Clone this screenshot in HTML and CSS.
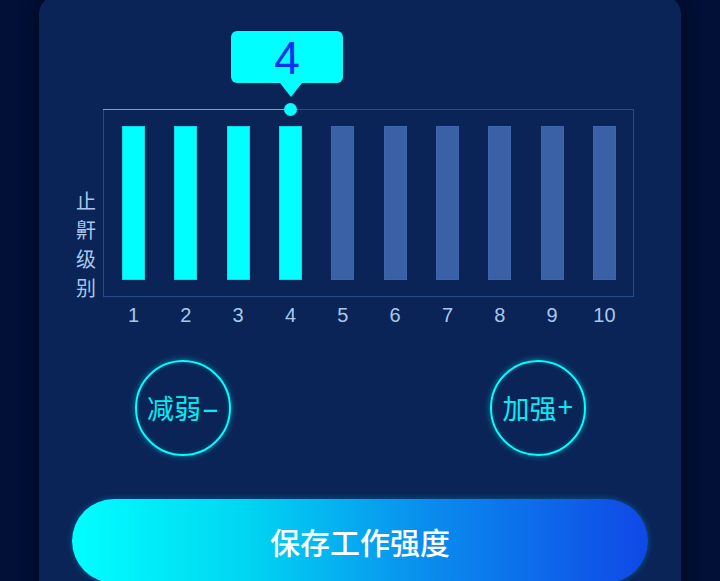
FILE: index.html
```html
<!DOCTYPE html>
<html lang="zh-CN">
<head>
    <meta charset="UTF-8">
    <meta name="viewport" content="width=device-width, initial-scale=1.0">
    <title>止鼾级别</title>
    <link rel="stylesheet" href="styles.css">
</head>
<body>
    <div class="page">
        <div class="card">
            <div class="chart-row">
                <div class="y-label">
                    <span>止</span><span>鼾</span><span>级</span><span>别</span>
                </div>
                <div class="chart-col">
                    <div class="chart">
                        <div class="level-line"></div>
                        <div class="level-dot"></div>
                        <div class="tip">4</div>
                        <div class="bars">
                            <div class="bar active"></div>
                            <div class="bar active"></div>
                            <div class="bar active"></div>
                            <div class="bar active"></div>
                            <div class="bar"></div>
                            <div class="bar"></div>
                            <div class="bar"></div>
                            <div class="bar"></div>
                            <div class="bar"></div>
                            <div class="bar"></div>
                        </div>
                    </div>
                    <div class="axis">
                        <span>1</span><span>2</span><span>3</span><span>4</span><span>5</span>
                        <span>6</span><span>7</span><span>8</span><span>9</span><span>10</span>
                    </div>
                </div>
            </div>

            <div class="controls">
                <button class="round-btn">减弱<span class="sign minus">-</span></button>
                <button class="round-btn">加强<span class="sign">+</span></button>
            </div>

            <button class="save-btn">保存工作强度</button>
        </div>
    </div>
</body>
</html>
```

FILE: styles.css
```css
body {
    margin: 0;
    background: #020f36;
    font-family: "Noto Sans CJK SC", "Noto Sans", sans-serif;
    height: 581px;
    overflow: hidden;
}
.page {
    padding: 0 39px;
}
.card {
    margin-top: -4px;
    height: 640px;
    background: #0a2457;
    border-radius: 18px 18px 0 0;
    box-shadow: 0 0 18px rgba(0, 0, 0, 0.45);
    padding: 113px 0 0 37px;
    box-sizing: border-box;
}
.chart-row {
    display: flex;
    align-items: flex-start;
    gap: 7px;
}
.y-label {
    width: 20px;
    display: flex;
    flex-direction: column;
    justify-content: flex-end;
    height: 193px;
    color: #a9c6e8;
    font-size: 20px;
    line-height: 29px;
    text-align: center;
}
.chart-col {
    width: 531px;
}
.chart {
    position: relative;
    height: 188px;
    box-sizing: border-box;
    border: 1px solid #284b8c;
    padding: 16px 17px 16px 18px;
}
.level-line {
    position: absolute;
    left: -1px;
    top: -1px;
    width: 188px;
    height: 1px;
    background: #22c8e0;
}
.level-dot {
    position: absolute;
    left: 180px;
    top: -7px;
    width: 13px;
    height: 13px;
    border-radius: 50%;
    background: #00ffff;
}
.tip {
    position: absolute;
    left: 127px;
    top: -79px;
    width: 112px;
    height: 52px;
    border-radius: 6px;
    background: #00ffff;
    color: #1230f2;
    font-family: "Liberation Sans", Arial, sans-serif;
    font-size: 46px;
    line-height: 54px;
    text-align: center;
    box-shadow: 0 0 1px rgba(0, 20, 60, 0.8);
}
.tip::after {
    content: "";
    position: absolute;
    left: 49px;
    top: 52px;
    border-left: 11px solid transparent;
    border-right: 11px solid transparent;
    border-top: 14px solid #00ffff;
}
.bars {
    display: flex;
    justify-content: space-between;
    height: 154px;
}
.bar {
    width: 23px;
    background: #3a61a6;
    box-shadow: inset 0 0 0 1px #3f66ac;
}
.bar.active {
    background: #00ffff;
    box-shadow: inset 0 0 0 1px #10d8e6;
}
.axis {
    display: flex;
    justify-content: space-between;
    padding: 6px 18px 0 19px;
    color: #a8c8ea;
    font-family: "Liberation Sans", Arial, sans-serif;
    font-size: 20px;
    line-height: 24px;
}
.axis span {
    width: 23px;
    display: flex;
    justify-content: center;
}
.controls {
    display: flex;
    justify-content: space-between;
    width: 451px;
    margin: 33px 0 0 59px;
}
.round-btn {
    width: 96px;
    height: 96px;
    border-radius: 50%;
    border: 2.5px solid #00ffff;
    background: transparent;
    box-shadow: 0 0 6px rgba(0, 255, 255, 0.45), inset 0 0 4px rgba(0, 255, 255, 0.25);
    color: #00eef6;
    font-family: "Noto Sans CJK SC", sans-serif;
    font-size: 27px;
    padding: 0 0 2px 0;
    white-space: nowrap;
    display: flex;
    align-items: center;
    justify-content: center;
}
.sign {
    font-family: "Liberation Sans", Arial, sans-serif;
    font-size: 27px;
    margin-left: 1px;
}
.sign.minus {
    margin: 0 4px 0 5px;
    transform: translateY(2px) scaleX(2);
}
.save-btn {
    display: block;
    width: 576px;
    height: 84px;
    margin: 43px 0 0 -4px;
    border: none;
    border-radius: 42px;
    background: linear-gradient(90deg, #00ffff 0%, #00d6f2 30%, #0a8cee 62%, #1048e6 100%);
    box-shadow: 0 0 6px rgba(0, 200, 255, 0.35);
    color: #ffffff;
    font-family: "Noto Sans CJK SC", sans-serif;
    font-size: 30px;
    font-weight: 500;
    padding: 0;
}
```
